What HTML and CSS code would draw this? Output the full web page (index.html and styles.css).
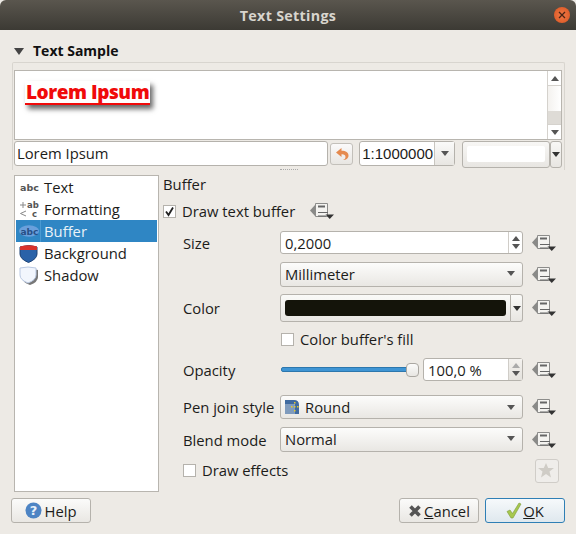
FILE: index.html
```html
<!DOCTYPE html>
<html lang="en">
<head>
<meta charset="utf-8">
<title>Text Settings</title>
<link rel="stylesheet" href="styles.css">
</head>
<body>
<svg class="defs" width="0" height="0" aria-hidden="true">
  <symbol id="dd" viewBox="0 0 24 16">
    <path d="M0 7.500 5 2V13Z" fill="#8a8a88"/>
    <path d="M5.500 .5H17.500V13.500H5.500Z" fill="#f4f3f0" stroke="#8c8c8a"/>
    <path d="M8 3.500H15" stroke="#666" stroke-width="2"/>
    <path d="M8 9.500H18M8 13H16" stroke="#666" stroke-width="1"/>
    <path d="M15.500 11.500H24L19.750 16Z" fill="#333"/>
  </symbol>
</svg>
<div class="window">
  <header class="titlebar">
    <span class="title">Text Settings</span>
    <span class="close"><svg width="16" height="16" viewBox="0 0 16 16"><path d="M5 5l6 6M11 5l-6 6" stroke="#4a2414" stroke-width="1.300"/></svg></span>
  </header>
  <main class="content">
    <div class="sample-head"><span class="tri-down"></span><span class="sample-title">Text Sample</span></div>
    <section class="group">
      <div class="preview">
        <div class="canvas"><span class="lorem">Lorem Ipsum</span></div>
        <div class="scrollbar">
          <span class="sb-btn"><i class="arr-up"></i></span>
          <span class="sb-track"><i class="sb-thumb"></i></span>
          <span class="sb-btn"><i class="arr-down"></i></span>
        </div>
      </div>
      <div class="sample-row">
        <div class="field sample-input">Lorem Ipsum</div>
        <button class="tool reset"><svg width="16" height="16" viewBox="0 0 16 16"><path d="M7.500 2 2 6.500 7.500 11V8.200C10 8 11.500 9 11.500 11 11.500 12.500 10.500 13.500 9 14 12.500 14 14.500 12 14.500 9.500 14.500 6.500 12 4.800 7.500 4.800Z" fill="#e58a4e"/></svg></button>
        <div class="scale"><span class="scale-val">1:1000000</span><span class="scale-btn"><i class="arr-down"></i></span></div>
        <div class="color-mini"><span class="color-mini-main"><i></i></span><span class="color-mini-btn"><i class="arr-down dark"></i></span></div>
      </div>
    </section>
    <div class="split-h"></div>
    <div class="panes">
      <ul class="list">
        <li class="item"><svg class="item-icon" width="22" height="16" viewBox="0 0 22 16"><text x="1" y="12" class="ic-t">abc</text></svg>Text</li>
        <li class="item"><svg class="item-icon" width="22" height="18" viewBox="0 0 22 18"><path d="M1 5H7M4 2V8M7 11 1.500 13.500 7 16" fill="none" stroke="#888" stroke-width="1"/><text x="8" y="7.500" class="ic-f">ab</text><text x="13" y="17" class="ic-f">c</text></svg>Formatting</li>
        <li class="item selected"><svg class="item-icon" width="22" height="16" viewBox="0 0 22 16"><ellipse cx="10.500" cy="8" rx="10.500" ry="6" fill="#6aa0dc"/><text x="1.500" y="12" class="ic-t ic-sel">abc</text></svg>Buffer</li>
        <li class="item"><svg class="item-icon" width="22" height="20" viewBox="0 0 22 20"><path d="M1 4Q10 1 18 4V11Q18 16 9.500 19.500 1 16 1 11Z" fill="#2a62a8" stroke="#1d4274"/><path d="M1 3.500Q10 1 18 3.500V7H1Z" fill="#d8322c"/></svg>Background</li>
        <li class="item"><svg class="item-icon" width="22" height="20" viewBox="0 0 22 20"><path d="M3 5Q10 2 19 5V12Q19 17 11 20 3 17 3 12Z" fill="#777"/><path d="M1 3Q9 1 17 3V10Q17 15 9 18 1 15 1 10Z" fill="#f2f6fd" stroke="#b9c8e2"/></svg>Shadow</li>
      </ul>
      <div class="split-v"></div>
      <div class="form">
        <div class="form-title">Buffer</div>
        <div class="draw-row">
          <label class="check"><span class="box"><svg width="13" height="13" viewBox="0 0 13 13"><path d="M3 6.500 5.500 10 10 2.500" fill="none" stroke="#222" stroke-width="1.800"/></svg></span>Draw text buffer</label>
          <svg class="dd dd-first"><use href="#dd"/></svg>
        </div>
        <div class="grid">
          <span class="lbl r-size">Size</span>
          <div class="field spin r-size"><span>0,2000</span><span class="spin-btns"><i class="arr-up"></i><i class="arr-down"></i></span></div>
          <svg class="dd r-size"><use href="#dd"/></svg>

          <div class="combo c2 r-unit raised"><span>Millimeter</span><i class="arr-down"></i></div>
          <svg class="dd r-unit"><use href="#dd"/></svg>

          <span class="lbl r-color">Color</span>
          <div class="colorbtn r-color"><span class="color-main"><i></i></span><span class="color-drop"><i class="arr-down dark"></i></span></div>
          <svg class="dd r-color"><use href="#dd"/></svg>

          <label class="check c2 r-fill"><span class="box"></span>Color buffer's fill</label>

          <span class="lbl r-op">Opacity</span>
          <div class="opacity r-op">
            <div class="slider"><span class="slider-fill"></span><span class="handle"></span></div>
            <div class="field spin op-spin"><span>100,0 %</span><span class="spin-btns tint"><i class="arr-up light"></i><i class="arr-down"></i></span></div>
          </div>
          <svg class="dd r-op"><use href="#dd"/></svg>

          <span class="lbl r-pen">Pen join style</span>
          <div class="combo r-pen"><span class="with-ic"><svg width="14" height="14" viewBox="0 0 14 14"><path d="M0 0H9Q14 0 14 5V14H10V5Q10 4 9 4H0Z" fill="#3f6aa0"/><path d="M0 4H9Q10 4 10 5V14H0Z" fill="#7f9bbd"/><path d="M6 6h1.500v1.500H6zM9 6h1.500v1.500H9zM9 2h1.500v1.500H9zM12 6h1.500v1.500H12zM9 10h1.500v1.500H9z" fill="#e6c92e"/></svg>Round</span><i class="arr-down"></i></div>
          <svg class="dd r-pen"><use href="#dd"/></svg>

          <span class="lbl r-blend">Blend mode</span>
          <div class="combo r-blend raised"><span>Normal</span><i class="arr-down"></i></div>
          <svg class="dd r-blend"><use href="#dd"/></svg>
        </div>
        <div class="effects-row">
          <label class="check"><span class="box"></span>Draw effects</label>
          <button class="star-btn"><svg width="18" height="18" viewBox="0 0 18 18"><path d="M8 1l2.200 5H16l-4.500 3.500L13 15.500 8 12l-5 3.500 1.500-6L0 6h5.800Z" fill="#cfccc6"/></svg></button>
        </div>
      </div>
    </div>
  </main>
  <footer class="footer">
    <button class="btn help"><svg width="17" height="17" viewBox="0 0 17 17"><circle cx="8.500" cy="8.500" r="8" fill="#4d84c4"/><text x="8.500" y="13" class="q">?</text></svg>Help</button>
    <span class="spacer"></span>
    <button class="btn cancel"><svg width="14" height="14" viewBox="0 0 14 14"><path d="M2.500 2.500l9 9M11.500 2.500l-9 9" stroke="#555" stroke-width="3.600"/></svg><span><u>C</u>ancel</span></button>
    <button class="btn ok"><svg width="16" height="17" viewBox="0 0 16 17"><path d="M1 9.500 4 8 6.500 11.500 13 1 15 2 7 16H5Z" fill="#a6c84e" stroke="#7e9a3a" stroke-width=".6"/></svg><span><u>O</u>K</span></button>
  </footer>
</div>
</body>
</html>
```

FILE: styles.css
```css
* { box-sizing: border-box; }
html, body { margin: 0; padding: 0; }
body {
  width: 576px; height: 534px; overflow: hidden; background: #edeae5;
  font-family: "Open Sans", "Noto Sans", sans-serif; font-size: 14.800px; color: #1c1c1a;
}
.defs { position: absolute; }
.window { width: 576px; height: 534px; display: flex; flex-direction: column; background: #edeae5; }
.titlebar {
  height: 30px; flex: none; display: flex; align-items: center; justify-content: center; position: relative;
  background: linear-gradient(#5a564e, #3c3a34); border-radius: 6px 6px 0 0;
}
.title { color: #d8d5ce; font-weight: 700; font-size: 14.300px; letter-spacing: .3px; }
.close {
  position: absolute; right: 6px; top: 7px; width: 16px; height: 16px; border-radius: 50%;
  background: radial-gradient(#ef7a48, #d9531f); display: block;
}
.close svg { display: block; }
.content { flex: 1; padding: 12px 11px 0 12px; display: flex; flex-direction: column; min-height: 0; }
.sample-head { display: flex; align-items: center; height: 17px; margin-bottom: 3px; }
.tri-down { width: 0; height: 0; border: 5.500px solid transparent; border-top: 7px solid #444; border-bottom: 0; margin: 1px 9px 0 2px; }
.sample-title { font-weight: 700; font-size: 14px; color: #111; }
.group { height: 108px; flex: none; border: 1px solid #d8d5cf; border-radius: 2px 2px 0 0; border-bottom: 0; padding: 7px 2px 0 1px; }
.preview { height: 70px; display: flex; border: 1px solid #b8b5af; background: #fff; }
.canvas { flex: 1; padding: 10px 10px; }
.lorem {
  display: inline-block; height: 24px; line-height: 23px; padding: 0 1px; background: #fff; color: #f00a0a;
  font-weight: 800; font-size: 19px; letter-spacing: -.45px; border-bottom: 2px solid #f00a0a; box-shadow: 3px 4px 5px rgba(0,0,0,.6);
  white-space: nowrap;
}
.scrollbar { width: 14px; display: flex; flex-direction: column; border-left: 1px solid #d5d2cd; background: #fff; }
.sb-btn { height: 14px; display: flex; align-items: center; justify-content: center; flex: none; }
.sb-track { flex: 1; display: flex; flex-direction: column; justify-content: flex-end; background: linear-gradient(90deg,#f4f2ef,#fff); border-top: 1px solid #d5d2cd; border-bottom: 1px solid #d5d2cd; }
.sb-thumb { display: block; height: 13px; background: #dedbd6; }
i.arr-up, i.arr-down { display: block; width: 0; height: 0; border-left: 4px solid transparent; border-right: 4px solid transparent; }
i.arr-up { border-bottom: 5px solid #555; }
i.arr-down { border-top: 5px solid #555; }
i.arr-up.light { border-bottom-color: #aaa; }
i.arr-down.dark { border-top-color: #333; }
.sample-row { display: flex; margin-top: 1px; height: 25px; }
.field {
  background: #fff; border: 1px solid #b5b2ac; border-radius: 3px; height: 100%;
  display: flex; align-items: center; padding-left: 2px; white-space: nowrap;
}
.sample-input { width: 315px; padding-bottom: 2px; }
.tool {
  width: 23px; height: 22px; margin: 2px 0 0 2px; padding: 0; border: 1px solid #c3c0ba; border-radius: 3px;
  background: linear-gradient(#fbfafa, #e8e6e2); display: flex; align-items: center; justify-content: center;
}
.scale {
  width: 96px; margin-left: 6px; display: flex; border: 1px solid #b5b2ac; border-radius: 3px; background: #fff;
  font-family: "Liberation Sans", sans-serif; font-size: 15px;
}
.scale-val { flex: 1; display: flex; align-items: center; padding-left: 2px; }
.scale-btn { width: 20px; border-left: 1px solid #c8c5bf; background: linear-gradient(#fafaf9,#e8e6e2); display: flex; align-items: center; justify-content: center; }
.color-mini { margin-left: 7px; display: flex; height: 27px; }
.color-mini-main { width: 88px; border: 1px solid #b5b2ac; border-radius: 3px; background: linear-gradient(#f8f7f5,#e8e6e2); padding: 4px; }
.color-mini-main i { display: block; height: 16px; background: #fff; border-radius: 2px; }
.color-mini-btn { width: 12px; border: 1px solid #b5b2ac; border-radius: 3px; background: linear-gradient(#f8f7f5,#e8e6e2); display: flex; align-items: center; justify-content: center; }
.split-h { height: 3px; width: 18px; flex: none; margin: 0 auto; border-top: 1px dotted #aaa; position: relative; top: -1px; }
.panes { display: flex; margin-top: 2px; height: 319px; flex: none; }
.list { list-style: none; margin: 0 0 0 2px; padding: 0 1px; width: 145px; height: 317px; background: #fff; border: 1px solid #b8b5af; flex: none; }
.item { height: 22px; display: flex; align-items: center; gap: 3px; padding-left: 3px; }
.item-icon { width: 22px; flex: none; }
.item.selected { background: #2f86c4; color: #eaf2f8; }
.item.selected .item-icon { border-right: 1px solid #4a9ad2; height: 22px; padding: 3px 0; }
.ic-t { font: 700 9.500px "DejaVu Sans", sans-serif; fill: #555; }
.ic-f { font: 700 8.500px "DejaVu Sans", sans-serif; fill: #555; }
.ic-sel { fill: #274f86; }
.split-v { width: 4px; flex: none; }
.form { flex: 1; }
.form-title { height: 18px; line-height: 18px; margin-bottom: 9px; }
.check { display: flex; align-items: center; gap: 6px; white-space: nowrap; }
.box { width: 13px; height: 13px; background: #fff; border: 1px solid #b5b2ac; display: block; flex: none; }
.box svg { display: block; margin: -1px; }
.draw-row { display: flex; align-items: center; height: 18px; }
.dd { width: 24px; height: 16px; flex: none; }
.dd-first { margin-left: 15px; }
.grid {
  display: grid; margin-top: 11px; margin-left: 20px; grid-template-columns: 97px 243px 33px;
  grid-template-rows: 23px 8px 25px 7px 28px 10px 14px 12px 23px 14px 24px 8px 25px; align-items: center;
}
.grid .dd { grid-column: 3; justify-self: end; }
.r-size { grid-row: 1; } .r-unit { grid-row: 3; } .r-color { grid-row: 5; } .r-fill { grid-row: 7; }
.r-op { grid-row: 9; } .r-pen { grid-row: 11; } .r-blend { grid-row: 13; }
.c2 { grid-column: 2; }
.grid .check { margin-left: 1px; }
.spin { justify-content: space-between; padding: 0 0 0 4px; }
.spin-btns { width: 14px; height: 100%; border-left: 1px solid #d0cdc8; display: flex; flex-direction: column; align-items: center; justify-content: center; gap: 3px; }
.spin-btns.tint { background: linear-gradient(#f4f2ef,#e4e2dd); }
.combo {
  height: 100%; border: 1px solid #b5b2ac; border-radius: 3px; background: linear-gradient(#fcfcfb, #e9e7e3);
  display: flex; align-items: center; justify-content: space-between; padding: 0 7px 0 4px;
}
.combo.raised { padding-bottom: 2px; }
.with-ic { display: flex; align-items: center; gap: 6px; }
.colorbtn { height: 100%; display: flex; }
.color-main { flex: 1; border: 1px solid #b5b2ac; border-radius: 3px 0 0 3px; background: linear-gradient(#fafaf8,#e8e6e2); padding: 5px 4px; }
.color-main i { display: block; height: 100%; background: #14140a; border-radius: 3px; }
.color-drop { width: 12px; border: 1px solid #b5b2ac; border-left: 0; border-radius: 0 3px 3px 0; background: linear-gradient(#fafaf8,#e8e6e2); display: flex; align-items: center; justify-content: center; }
.opacity { display: flex; height: 100%; align-items: center; gap: 4px; }
.slider { width: 138px; margin-left: 1px; height: 16px; position: relative; display: flex; align-items: center; }
.slider-fill { display: block; width: 100%; height: 5px; background: #3f95d4; border: 1px solid #2d77ad; border-radius: 2px; }
.handle { position: absolute; right: 0; top: 1px; width: 13px; height: 14px; background: linear-gradient(#fbfbfa,#e8e6e2); border: 1px solid #aaa7a1; border-radius: 4px; }
.op-spin { width: 100px; }
.effects-row { display: flex; align-items: center; justify-content: space-between; margin: 7px 0 0 20px; width: 376px; height: 24px; }
.effects-row .check { padding-bottom: 2px; }
.star-btn { width: 24px; height: 24px; padding: 0; border: 1px solid #d0cdc8; border-radius: 3px; background: #efedea; display: flex; align-items: center; justify-content: center; }
.footer { flex: none; height: 36px; padding: 0 11px 11px 11px; display: flex; gap: 6px; align-items: stretch; }
.spacer { flex: 1; }
.btn {
  width: 80px; height: 25px; padding: 0; border: 1px solid #b5b2ac; border-radius: 3px; background: linear-gradient(#fbfbfa, #e9e7e3);
  display: flex; align-items: center; justify-content: center; gap: 2px; font: inherit; color: inherit;
}
.btn.ok { border-color: #2f7fb5; background: linear-gradient(#f6f9fb, #dfe8ee); gap: 1px; }
.q { font: 700 13px "DejaVu Sans", sans-serif; fill: #e8f0fa; text-anchor: middle; }
```
